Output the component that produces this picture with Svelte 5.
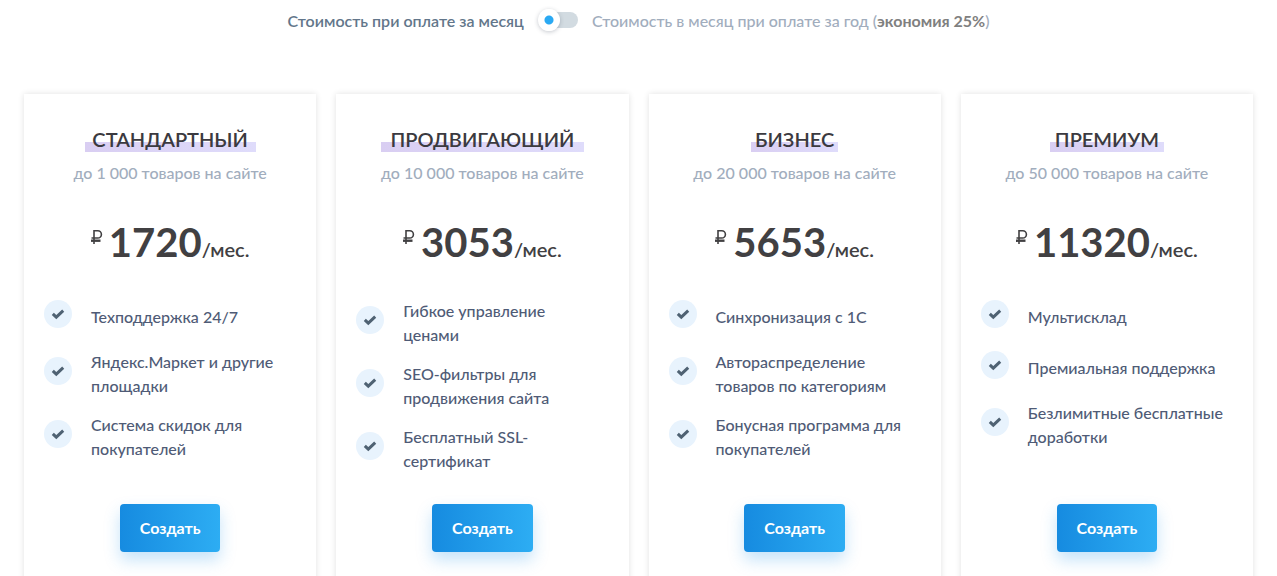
<script>
  let yearly = $state(false);

  const plans = [
    {
      name: 'СТАНДАРТНЫЙ',
      limit: 'до 1 000 товаров на сайте',
      price: '1720',
      features: ['Техподдержка 24/7', 'Яндекс.Маркет и другие площадки', 'Система скидок для покупателей'],
    },
    {
      name: 'ПРОДВИГАЮЩИЙ',
      limit: 'до 10 000 товаров на сайте',
      price: '3053',
      features: ['Гибкое управление ценами', 'SEO-фильтры для продвижения сайта', 'Бесплатный SSL-сертификат'],
    },
    {
      name: 'БИЗНЕС',
      limit: 'до 20 000 товаров на сайте',
      price: '5653',
      features: ['Синхронизация с 1С', 'Автораспределение товаров по категориям', 'Бонусная программа для покупателей'],
    },
    {
      name: 'ПРЕМИУМ',
      limit: 'до 50 000 товаров на сайте',
      price: '11320',
      features: ['Мультисклад', 'Премиальная поддержка', 'Безлимитные бесплатные доработки'],
    },
  ];
</script>

<main>
  <div class="billing">
    <label for="period" class="monthly">Стоимость при оплате за месяц</label>
    <input id="period" class="switch" type="checkbox" role="switch" bind:checked={yearly} />
    <label for="period" class="annual">Стоимость в месяц при оплате за год (<b>экономия 25%</b>)</label>
  </div>

  <div class="plans">
    {#each plans as plan}
      <section class="card">
        <h2>{plan.name}</h2>
        <p class="limit">{plan.limit}</p>
        <p class="price">
          <svg class="ruble" viewBox="0 0 12 16" role="img" aria-label="₽">
            <path d="M3 15V1.8H6.8a3.4 3.4 0 0 1 0 7.2H0.5" />
            <path d="M0 11.7h9.5" stroke-width="2.4" />
          </svg>
          <span class="amount">{plan.price}</span><span class="unit">/мес.</span>
        </p>
        <ul>
          {#each plan.features as feature}
            <li>
              <span class="tick">
                <svg viewBox="0 0 28 28" aria-hidden="true">
                  <path d="M8.8 13.8l3.5 3.3 6.9-6.5" />
                </svg>
              </span>
              <span>{feature}</span>
            </li>
          {/each}
        </ul>
        <button type="button">Создать</button>
      </section>
    {/each}
  </div>
</main>

<style>
  :global(body) {
    margin: 0;
    background: #fff;
  }

  main {
    font-family: Lato, 'Noto Sans', sans-serif;
    font-size: 16px;
    font-weight: 500;
    line-height: 24px;
    color: #4f5b76;
  }

  .billing {
    display: flex;
    align-items: center;
    justify-content: center;
    gap: 14px;
    height: 42px;
  }

  .monthly {
    font-weight: 600;
    color: #62768a;
  }

  .annual {
    color: #a1adbd;
  }

  .annual b {
    font-weight: 700;
    color: #808080;
  }

  .switch {
    appearance: none;
    display: flex;
    align-items: center;
    width: 40px;
    height: 16px;
    margin: 0 0 2px;
    border-radius: 8px;
    background: #d2dbe1;
    cursor: pointer;
  }

  .switch::before {
    content: '';
    width: 22px;
    height: 22px;
    border-radius: 50%;
    background: radial-gradient(circle, #2aa9f3 4px, #fff 5px);
    box-shadow: 0 1px 4px rgba(60, 70, 90, 0.3);
  }

  .switch:checked::before {
    margin-left: auto;
  }

  .plans {
    display: grid;
    grid-template-columns: repeat(4, minmax(0, 1fr));
    gap: 20px;
    padding: 52px 24px 0;
  }

  .card {
    display: flex;
    flex-direction: column;
    align-items: center;
    padding: 31px 20px 40px;
    background: #fff;
    box-shadow: 0 0 6px rgba(0, 0, 0, 0.12);
  }

  h2 {
    position: relative;
    z-index: 0;
    margin: 0;
    font-size: 20px;
    font-weight: 600;
    line-height: 28px;
    color: #3b3a40;
  }

  h2::after {
    content: '';
    position: absolute;
    z-index: -1;
    inset: 17px -5% 1px;
    background: linear-gradient(90deg, #d9cef2, #dfdcfb);
  }

  .limit {
    margin: 8px 0 0;
    color: #a1adbd;
  }

  .price {
    display: flex;
    align-items: baseline;
    margin: 32px 0 0;
    line-height: 50px;
    color: #414042;
  }

  .ruble {
    align-self: flex-start;
    width: 12px;
    height: 16px;
    margin: 12px 6px 0 0;
    fill: none;
    stroke: currentColor;
    stroke-width: 1.6;
  }

  .amount {
    font-size: 40px;
    font-weight: 700;
  }

  .unit {
    font-size: 20px;
    font-weight: 600;
  }

  ul {
    display: grid;
    gap: 15px;
    align-self: stretch;
    margin: 25px 0 31px;
    padding: 0;
    list-style: none;
  }

  li {
    display: flex;
    align-items: center;
    gap: 19px;
    min-height: 36px;
    padding-right: 6px;
  }

  .tick {
    flex: none;
    width: 28px;
    height: 28px;
    margin-bottom: 6px;
    border-radius: 50%;
    background: #e8f3fd;
  }

  .tick svg {
    display: block;
    fill: none;
    stroke: #4f6273;
    stroke-width: 3;
  }

  button {
    height: 48px;
    margin-top: auto;
    padding: 0 20px;
    border: 0;
    border-radius: 4px;
    background: linear-gradient(90deg, #168be0, #2dadf3);
    box-shadow: 0 8px 16px rgba(30, 145, 230, 0.26);
    font: inherit;
    font-weight: 700;
    color: #fff;
    cursor: pointer;
  }
</style>
